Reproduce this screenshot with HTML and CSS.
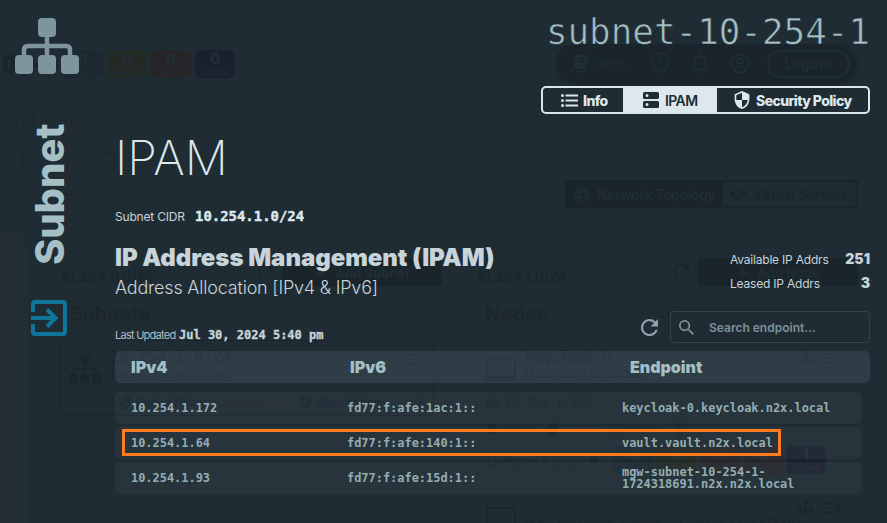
FILE: index.html
```html
<!DOCTYPE html>
<html lang="en">
<head>
<meta charset="utf-8">
<title>Subnet IPAM</title>
<link rel="stylesheet" href="styles.css">
</head>
<body>
<svg width="0" height="0" class="defs">
  <symbol id="tree" viewBox="0 0 64 56"><rect x="23" y="0" width="18" height="19" rx="4"/><rect x="0" y="37" width="18" height="19" rx="4"/><rect x="23" y="37" width="18" height="19" rx="4"/><rect x="46" y="37" width="18" height="19" rx="4"/><path d="M32 18v20M9 38v-6q0-4 4-4h38q4 0 4 4v6" fill="none" stroke="currentColor" stroke-width="4.5"/></symbol>
  <symbol id="refresh" viewBox="4 4 16 16"><path d="M17.65 6.35A7.96 7.96 0 0 0 12 4a8 8 0 1 0 7.73 10h-2.08A6 6 0 1 1 12 6c1.66 0 3.14.69 4.22 1.78L13 11h7V4z"/></symbol>
  <symbol id="search" viewBox="3 3 17.5 17.5"><path d="M15.5 14h-.79l-.28-.27A6.47 6.47 0 0 0 16 9.5 6.5 6.5 0 1 0 9.5 16c1.61 0 3.09-.59 4.23-1.57l.27.28v.79l5 4.99L20.49 19zm-6 0a4.5 4.5 0 1 1 0-9 4.5 4.5 0 0 1 0 9"/></symbol>
  <symbol id="shield" viewBox="3 1 18 22"><path d="M12 1 3 5v6c0 5.55 3.84 10.74 9 12 5.16-1.26 9-6.45 9-12V5zm0 10.99h7c-.53 4.12-3.28 7.79-7 8.94V12H5V6.3l7-3.11z"/></symbol>
  <symbol id="globe" viewBox="0 0 18 18"><g fill="none" stroke="currentColor" stroke-width="1.6"><circle cx="9" cy="9" r="7.6"/><ellipse cx="9" cy="9" rx="3.5" ry="7.6"/><path d="M2 6h14M2 12h14"/></g></symbol>
  <symbol id="menu" viewBox="0 0 16 12"><path d="M0 1.5h11M0 6h9M0 10.500h11M15.500 2.500 12 6l3.500 3.500" fill="none" stroke="currentColor" stroke-width="1.600"/></symbol>
  <symbol id="screen" viewBox="0 0 30 24"><rect x="1" y="1" width="28" height="22" rx="2" fill="none" stroke="currentColor" stroke-width="2"/><path d="M2 18h26v5H2z"/></symbol>
</svg>
<div class="stage">
  <div class="back" aria-hidden="true">
    <div class="b-top">
      <div class="alerts"><span class="alert-label"><i>!</i>Alerts</span>
        <span class="badge info"><b>0</b>info</span><span class="badge warn"><b>0</b>warning</span><span class="badge err"><b>0</b>error</span><span class="badge crit"><b>0</b>critical</span>
      </div>
      <div class="nav">
        <svg class="book" viewBox="0 0 18 18"><path d="M5 0h12l-4 14H1z"/><path d="M7 4h7M6 7h7" stroke="#19242b" stroke-width="1.300"/><path d="M1 14q-1 3 2 3h10l4-13" fill="none" stroke="currentColor" stroke-width="1.400"/></svg>
        <span class="docs">Docs</span>
        <svg class="n-icon help" viewBox="0 0 20 23"><path d="M10 21v-3a8.500 8.500 0 1 1 5-1.500q-1 3-5 5M7.500 7.500q.5-2.500 2.800-2.300 3 .3 2 3-.4.8-1.500 1.600-.8.700-.8 1.700M10 13v2" fill="none" stroke="currentColor" stroke-width="1.800"/></svg>
        <svg class="n-icon bell" viewBox="0 0 16 20"><path d="M0 16h16M2.500 16V9q0-6 5.500-6t5.500 6v7M8 0v3" fill="none" stroke="currentColor" stroke-width="2"/><circle cx="8" cy="18" r="2"/></svg>
        <svg class="n-icon" viewBox="0 0 20 20"><g fill="none" stroke="currentColor" stroke-width="2"><circle cx="10" cy="10" r="9"/><circle cx="10" cy="7.500" r="2.800"/><path d="M3.500 15.500q6.500-5 13 0"/></g></svg>
        <span class="logout">Logout</span>
      </div>
    </div>
    <div class="b-title">Network<br>Topology</div>
    <div class="b-rule"><i></i><div class="b-toggle"><span class="on"><svg><use href="#globe"/></svg>Network Topology</span><span class="off"><svg viewBox="0 0 18 18"><circle cx="9" cy="9" r="5" fill="none" stroke="currentColor" stroke-width="2"/><path d="M0 7h4v4H0zM14 7h4v4h-4zM7 8h4v4H7z"/></svg>Virtual Servers</span></div></div>
    <div class="b-body">
      <div class="rail"></div>
      <section class="col">
        <div class="col-top"><div class="net"><small>network</small><b>10.254.0.0/16</b></div><svg><use href="#refresh"/></svg><span class="add"><i>+</i>Add Subnet</span></div>
        <div class="col-head"><b>Subnets</b><svg><use href="#search"/></svg><span>Search subnet...</span></div>
        <div class="card sub">
          <div class="card-top"><svg class="c-icon"><use href="#tree"/></svg><div class="c-text"><b class="mono">10.254.1.0/24</b><span>Secret Mgm Subnet</span></div><svg class="menu"><use href="#menu"/></svg></div>
          <div class="policy"><svg><use href="#shield"/></svg><b>Default Policy</b><span class="accept">ACCEPT</span><svg><use href="#globe"/></svg><b>Alloc. IP Addrs</b><span class="three">3</span></div>
        </div>
      </section>
      <section class="col">
        <div class="col-top"><div class="net"><small>subnet</small><b>10.254.1.0/24</b></div><svg><use href="#refresh"/></svg><span class="add"><i>+</i>Add Node</span></div>
        <div class="col-head"><b>Nodes</b><svg><use href="#search"/></svg><span>Search node...</span></div>
        <div class="card node">
          <div class="card-top"><svg class="c-screen"><use href="#screen"/></svg><div class="c-text"><b>keycloak-0</b><span>[k8s-pod] keycloak</span></div><svg class="s-tree"><use href="#tree"/></svg><svg class="menu"><use href="#menu"/></svg></div>
          <div class="addr"><i class="cloud"></i>10.254.1.172</div>
          <div class="meters"><i class="dot"></i><i class="bar"></i><i class="chip"></i><i class="bar gold"></i><i class="disk"></i><i class="bar"></i><span>load</span></div>
          <div class="os"><i class="pen"></i><span>Alpine 3.20.2</span><i class="bug"></i><span class="badge info"><b>0</b>low</span><span class="badge warn"><b>0</b>med</span><span class="badge err"><b>0</b>mod</span><span class="badge err"><b>0</b>high</span><span class="badge crit"><b>1</b>critical</span></div>
        </div>
        <div class="card node"><div class="card-top"><svg class="c-screen"><use href="#screen"/></svg><div class="c-text second"><span>[k8s-gw] mgw-subnet-10-254-1-1724318691</span></div><svg class="s-tree"><use href="#tree"/></svg><svg class="menu"><use href="#menu"/></svg></div></div>
      </section>
    </div>
  </div>

  <div class="front">
    <aside>
      <svg class="logo"><use href="#tree"/></svg>
      <div class="side-word">Subnet</div>
      <svg class="exit" viewBox="0 0 36 36"><path d="M2 12V4q0-2 2-2h28q2 0 2 2v28q0 2-2 2H4q-2 0-2-2v-8M0 18h24M16 9.500l8.500 8.500-8.500 8.500" fill="none" stroke="currentColor" stroke-width="4"/></svg>
    </aside>
    <main>
      <div class="name">subnet-10-254-1</div>
      <nav class="tabs">
        <span class="tab t1"><svg viewBox="0 0 17 13"><path d="M4.500 1.500H17M4.500 6.500H17M4.500 11.500H17" stroke="currentColor" stroke-width="2"/><circle cx="1.500" cy="1.500" r="1.500"/><circle cx="1.500" cy="6.500" r="1.500"/><circle cx="1.500" cy="11.500" r="1.500"/></svg>Info</span>
        <span class="tab t2"><svg viewBox="0 0 16 16"><path fill-rule="evenodd" d="M1.500 0h13q1.500 0 1.500 1.500v4Q16 7 14.500 7h-13Q0 7 0 5.500v-4Q0 0 1.500 0M4 2a1.500 1.500 0 1 0 0 3 1.500 1.500 0 0 0 0-3M1.500 9h13q1.500 0 1.500 1.500v4q0 1.500-1.500 1.500h-13Q0 16 0 14.500v-4Q0 9 1.500 9M4 11a1.500 1.500 0 1 0 0 3 1.500 1.500 0 0 0 0-3"/></svg>IPAM</span>
        <span class="tab t3"><svg><use href="#shield"/></svg>Security Policy</span>
      </nav>
      <h1>IPAM</h1>
      <div class="cidr"><span>Subnet CIDR</span><b>10.254.1.0/24</b></div>
      <div class="summary">
        <div><h2>IP Address Management (IPAM)</h2><p>Address Allocation [IPv4 &amp; IPv6]</p></div>
        <dl><div><dt>Available IP Addrs</dt><dd>251</dd></div><div><dt>Leased IP Addrs</dt><dd>3</dd></div></dl>
      </div>
      <div class="tools">
        <div class="updated"><span>Last Updated</span><b>Jul 30, 2024 5:40 pm</b></div>
        <svg class="reload"><use href="#refresh"/></svg>
        <div class="search"><svg><use href="#search"/></svg>Search endpoint...</div>
      </div>
      <div class="table">
        <div class="head"><span>IPv4</span><span>IPv6</span><span>Endpoint</span></div>
        <div class="row"><span>10.254.1.172</span><span>fd77:f:afe:1ac:1::</span><span>keycloak-0.keycloak.n2x.local</span></div>
        <div class="row"><span>10.254.1.64</span><span>fd77:f:afe:140:1::</span><span>vault.vault.n2x.local</span><i class="mark"></i></div>
        <div class="row"><span>10.254.1.93</span><span>fd77:f:afe:15d:1::</span><span>mgw-subnet-10-254-1-<br>1724318691.n2x.n2x.local</span></div>
      </div>
    </main>
  </div>
</div>
</body>
</html>
```
FILE: styles.css
```css
* { box-sizing: border-box; }
body { margin: 0; background: #202c34; font-family: Inter, "Liberation Sans", sans-serif; }
svg { fill: currentColor; flex: none; }
.defs { display: block; position: absolute; }
.stage { display: grid; width: 887px; height: 523px; overflow: hidden; }
.back, .front { grid-area: 1 / 1; width: 887px; height: 523px; overflow: hidden; }

/* dimmed page behind the panel */
.back { color: #1a252c; display: flex; flex-direction: column; }
.b-top { height: 106px; flex: none; display: flex; justify-content: space-between; padding: 44px 31px 0 3px; }
.alerts { display: flex; gap: 4px; padding-top: 6px; }
.alert-label { width: 56px; height: 18px; margin-top: 5px; font-size: 12px; font-weight: 700; line-height: 18px; }
.alert-label i { display: inline-block; width: 12px; margin-right: 8px; background: #1a252c; color: #24303a; text-align: center; font-style: normal; }
.badge { width: 40px; height: 28px; border-radius: 5px; font-size: 8px; line-height: 9px; text-align: center; color: #252e36; flex: none; }
.badge b { display: block; font-size: 14px; line-height: 18px; font-weight: 800; }
.info { background: #1d2931; }
.warn { background: #232925; }
.err { background: #262529; }
.crit { background: #1b202d; }
.nav { width: 300px; height: 39px; border-radius: 20px; background: #19242b; color: #212d35; display: flex; align-items: center; padding: 0 6px 0 15px; box-shadow: 1px 2px 3px #1b262d; }
.book { width: 18px; height: 18px; }
.docs { font-size: 13px; width: 55px; margin-left: 6px; }
.n-icon { width: 20px; height: 21px; margin-right: 22px; }
.help { height: 23px; }
.bell { width: 16px; margin-right: 22px; }
.nav .n-icon:nth-of-type(4) { margin-right: 17px; }
.logout { border: 2px solid; width: 83px; height: 28px; border-radius: 14px; text-align: center; font-size: 14px; line-height: 24px; font-weight: 700; }
.b-title { height: 74px; flex: none; padding-left: 12px; font-size: 34px; line-height: 35px; font-weight: 200; color: #1d2931; }
.b-rule { height: 28px; flex: none; display: flex; align-items: center; justify-content: space-between; padding-right: 29px; }
.b-rule > i { width: 533px; height: 1px; background: #1a252c; }
.b-toggle { display: flex; width: 293px; height: 28px; border: 2px solid #19242b; border-radius: 4px; font-size: 14px; font-weight: 600; letter-spacing: -.4px; }
.b-toggle span { display: flex; align-items: center; gap: 6px; white-space: nowrap; }
.b-toggle svg { width: 17px; height: 17px; }
.on { width: 156px; background: #19242b; color: #212d35; padding-left: 7px; }
.off { padding-left: 7px; }
.b-body { flex: 1; display: flex; padding-top: 24px; min-height: 0; }
.rail { width: 28px; flex: none; background: #232d36; border-radius: 0 20px 0 0; margin-right: 32px; }
.col { width: 382px; margin-right: 34px; padding-top: 26px; flex: none; }
.col-top { display: flex; height: 28px; }
.net { width: 198px; font-size: 14px; line-height: 14px; }
.net small { display: block; font-size: 9px; line-height: 12px; color: #1d2830; }
.net b { font-weight: 600; }
.col-top svg { width: 15px; height: 15px; margin-top: 6px; }
.add { margin-left: auto; width: 160px; background: #19242b; color: #212d35; border-radius: 4px; text-align: center; font-size: 13px; line-height: 28px; font-weight: 700; }
.add i { font-size: 20px; font-weight: 500; font-style: normal; margin-right: 8px; vertical-align: -1px; }
.col-head { display: flex; align-items: center; height: 40px; margin-top: 8px; border: 1px solid #1d2830; border-radius: 5px; padding-left: 8px; color: #1b262e; }
.col-head b { width: 175px; font-size: 20px; }
.col-head svg { width: 13px; height: 13px; }
.col-head span { margin-left: 17px; font: 11px "DejaVu Sans Mono", monospace; color: #1e2931; }
.card { width: 374px; margin-top: 6px; }
.sub { border: 1px solid #1a252c; border-radius: 4px; height: 76px; }
.card-top { display: flex; height: 52px; padding: 8px 5px 0 8px; }
.c-icon { width: 32px; height: 28px; margin-top: 6px; }
.c-text { flex: 1; margin-left: 9px; font-size: 13px; color: #1b262d; }
.c-text b, .c-text span { display: block; line-height: 17px; }
.c-text b { font-size: 16px; }
.c-text .mono { font: 700 15.500px/17px "DejaVu Sans Mono", monospace; }
.second { padding-top: 17px; white-space: nowrap; width: 0; }
.menu { width: 16px; height: 12px; margin: 4px 5px 0 0; }
.policy { display: flex; align-items: center; height: 18px; padding-left: 57px; font-size: 12px; }
.policy svg { width: 13px; height: 14px; margin-right: 5px; }
.policy b { width: 68px; letter-spacing: -.9px; white-space: nowrap; color: #1c2730; }
.accept { width: 80px; border-radius: 8px; background: #232b33; color: #1f2a32; text-align: center; margin: 0 13px 0 2px; }
.three { width: 26px; text-align: center; margin-left: auto; }
.node { height: 144px; }
.node .card-top { padding-left: 10px; }
.c-screen { width: 30px; height: 24px; margin-top: 9px; }
.s-tree { width: 15px; height: 14px; margin: 2px 11px 0 0; }
.addr { display: flex; align-items: center; gap: 5px; padding-left: 10px; height: 22px; font: 12px "DejaVu Sans Mono", monospace; color: #1b262d; }
.cloud { width: 14px; height: 8px; border-radius: 4px; background: currentColor; }
.meters { display: flex; align-items: center; gap: 5px; height: 30px; padding-left: 11px; font-size: 10px; }
.dot, .chip { width: 10px; height: 10px; border-radius: 5px; background: currentColor; }
.chip { height: 13px; margin-left: 6px; border-radius: 2px; }
.bar { width: 35px; height: 5px; border-radius: 3px; background: #1c2730; }
.gold { background: #292d28; }
.disk { width: 13px; height: 11px; border: 1px solid; border-radius: 3px; margin-left: 3px; }
.meters span { writing-mode: vertical-rl; transform: rotate(180deg); margin-left: 8px; }
.os { display: flex; align-items: center; gap: 3px; height: 32px; padding-left: 12px; font-size: 12px; color: #1b262d; }
.os > span:nth-of-type(1) { width: 85px; white-space: nowrap; }
.pen { width: 8px; height: 12px; border: 1px solid; border-radius: 4px 4px 2px 2px; margin-right: 3px; }
.bug { width: 9px; height: 10px; background: currentColor; border-radius: 5px; margin-right: 12px; }

/* subnet panel */
.front { display: flex; color: #dce8ec; }
aside { width: 115px; flex: none; padding-top: 18px; }
.logo { display: block; width: 64px; height: 56px; margin-left: 15px; color: #7d959b; }
.side-word { height: 143px; width: 48px; margin: 48px 0 0 26px; writing-mode: vertical-rl; transform: rotate(180deg); font-size: 40px; line-height: 48px; font-weight: 800; letter-spacing: -.1px; color: #a5bfc5; white-space: nowrap; }
.exit { display: block; width: 36px; height: 36px; margin: 35px 0 0 31px; color: #13749b; }
main { width: 755px; }
.name { height: 86px; padding-top: 12px; text-align: right; font: 35.900px/40px "DejaVu Sans Mono", monospace; color: #a3bfc4; -webkit-text-stroke: .7px #202c34; }
.tabs { display: flex; width: 329px; height: 28px; margin-left: auto; border: 2px solid #dce8ec; border-radius: 5px; font-size: 14px; font-weight: 800; letter-spacing: -.6px; background: #202c34; }
.tab { display: flex; align-items: center; white-space: nowrap; }
.t1 { width: 80px; padding-left: 18px; gap: 5px; }
.t1 svg { width: 17px; height: 13px; }
.t2 { width: 94px; padding-left: 20px; gap: 6px; background: #dce8ec; color: #202c34; font-weight: 600; }
.t2 svg { width: 16px; height: 16px; }
.t3 { padding-left: 17px; gap: 6px; }
.t3 svg { width: 16px; height: 18px; }
h1 { margin: 0; padding-top: 15px; height: 94px; font-size: 48px; line-height: 58px; font-weight: 200; }
.cidr { height: 32px; display: flex; align-items: baseline; color: #c7d4d9; font-size: 12px; line-height: 17px; }
.cidr span { width: 80px; letter-spacing: -.2px; }
.cidr b { font: 700 13.950px/17px "DejaVu Sans Mono", monospace; color: #dce8ec; -webkit-text-stroke: .4px; }
.summary { display: flex; justify-content: space-between; height: 71px; color: #c7d4d9; }
h2 { margin: 3px 0 0; font-size: 24px; line-height: 29px; font-weight: 900; letter-spacing: -.05px; white-space: nowrap; }
.summary p { margin: 5px 0 0; font-size: 18px; line-height: 22px; font-weight: 300; letter-spacing: -.2px; }
dl { margin: 7px 0 0; width: 140px; }
dl > div { display: flex; justify-content: space-between; align-items: baseline; height: 24px; line-height: 24px; }
dt { font-size: 12px; letter-spacing: -.2px; }
dd { margin: 0; font-size: 14px; font-weight: 900; }
.tools { display: flex; height: 40px; }
.updated { flex: 1; display: flex; align-items: baseline; padding-top: 16px; font-size: 11px; line-height: 16px; color: #adbdc4; }
.updated span { width: 64px; white-space: nowrap; letter-spacing: -.75px; }
.updated b { font: 700 12px/16px "DejaVu Sans Mono", monospace; color: #c7d4d9; -webkit-text-stroke: .3px; }
.reload { width: 17px; height: 17px; margin: 8px 12px 0 0; color: #8fa5ac; }
.search { width: 200px; height: 32px; border: 1px solid #34434b; border-radius: 4px; display: flex; align-items: center; padding-left: 8px; gap: 15px; font-size: 12px; font-weight: 600; color: #7b9299; }
.search svg { width: 15px; height: 15px; }
.head, .row { display: grid; align-items: center; height: 32px; border-radius: 5px; }
.head { grid-template-columns: 219px 280px 1fr; padding-left: 16px; background: rgba(80, 103, 111, .3); font-size: 16px; font-weight: 900; color: #a3bfc4; margin-bottom: 9px; }
.row { position: relative; width: 747px; grid-template-columns: 216px 275px 1fr; padding-left: 16px; margin-bottom: 3px; background: rgba(70, 88, 97, .18); font: 700 11.950px/12px "DejaVu Sans Mono", monospace; color: #94adb3; }
.mark { position: absolute; left: 7px; top: 2px; width: 659px; height: 27px; border: 3px solid #ff7b1f; }
```
